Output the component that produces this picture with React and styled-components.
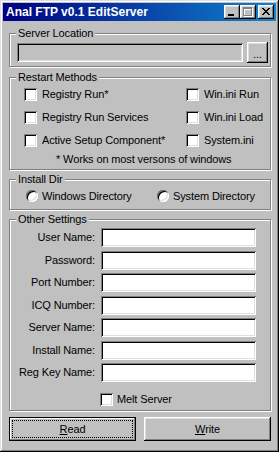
import React from "react";
import styled, { createGlobalStyle } from "styled-components";

const GlobalStyle = createGlobalStyle`
  html, body {
    margin: 0;
    padding: 0;
    background: #c0c0c0;
  }
  body {
    font-family: "Liberation Sans", Arial, sans-serif;
    font-size: 11px;
    letter-spacing: -0.12px;
    color: #000;
  }
`;

const raised = `
  box-shadow: inset -1px -1px #000, inset 1px 1px #fff,
    inset -2px -2px #808080, inset 2px 2px #dfdfdf;
`;
const sunken = `
  box-shadow: inset 1px 1px #808080, inset -1px -1px #fff,
    inset 2px 2px #000, inset -2px -2px #dfdfdf;
`;

const Window = styled.div`
  width: 279px;
  height: 452px;
  box-sizing: border-box;
  padding: 3px;
  background: #c0c0c0;
  box-shadow: inset -1px -1px #000, inset 1px 1px #dfdfdf,
    inset -2px -2px #808080, inset 2px 2px #fff;
  display: flex;
  flex-direction: column;
`;

const TitleBar = styled.div`
  height: 18px;
  display: flex;
  align-items: center;
  padding: 0 2px 0 3px;
  background: linear-gradient(to right, #000080, #1084d0);
`;

const Title = styled.span`
  flex: 1;
  color: #fff;
  font-weight: bold;
  font-size: 12px;
  letter-spacing: 0;
  line-height: 18px;
  white-space: nowrap;
`;

const CapButton = styled.div`
  width: 16px;
  height: 14px;
  background: #c0c0c0;
  margin-left: ${(p) => p.$gap || 0}px;
  ${raised}
  svg {
    display: block;
  }
`;

const Body = styled.div`
  display: flex;
  flex-direction: column;
  padding: 0 5px 0 6px;
`;

const Group = styled.div`
  margin-top: ${(p) => p.$top}px;
  border: 1px solid #808080;
  box-shadow: inset 1px 1px #fff, 1px 1px #fff;
  display: flex;
  flex-direction: column;
  padding-bottom: ${(p) => p.$bottom}px;
`;

const Legend = styled.div`
  align-self: flex-start;
  margin: -7px 0 0 6px;
  padding: 0 2px;
  line-height: 13px;
  background: #c0c0c0;
`;

const LocationRow = styled.div`
  display: flex;
  align-items: center;
  gap: 4px;
  margin: 2px 0 0 7px;
`;

const Field = styled.input`
  box-sizing: border-box;
  width: ${(p) => (p.$w ? `${p.$w}px` : "100%")};
  height: 19px;
  margin: 0;
  border: 0;
  padding: 2px 3px;
  font: inherit;
  outline: none;
  background: ${(p) => (p.disabled ? "#c0c0c0" : "#fff")};
  ${sunken}
`;

const SmallButton = styled.div`
  width: 21px;
  height: 21px;
  box-sizing: border-box;
  background: #c0c0c0;
  display: flex;
  align-items: center;
  justify-content: center;
  padding-top: 3px;
  ${raised}
`;

const OptionGrid = styled.div`
  display: grid;
  grid-template-columns: ${(p) => p.$cols};
  grid-auto-rows: ${(p) => p.$row}px;
  row-gap: 10px;
  margin: 4px 0 0 ${(p) => p.$left}px;
`;

const Option = styled.label`
  display: flex;
  align-items: center;
  gap: ${(p) => p.$gap ?? 5}px;
  line-height: 13px;
  white-space: nowrap;
`;

const Check = styled.input.attrs({ type: "checkbox" })`
  appearance: none;
  width: 13px;
  height: 13px;
  margin: 0;
  flex: none;
  background: #fff;
  ${sunken}
`;

const Radio = styled.input.attrs({ type: "radio" })`
  appearance: none;
  width: 12px;
  height: 12px;
  margin: 0;
  flex: none;
  border-radius: 50%;
  background: #fff;
  box-shadow: inset 1px 1px #808080, inset -1px -1px #fff,
    inset 2px 2px #000, inset -2px -2px #dfdfdf;
`;

const Note = styled.div`
  margin: 6px 0 0 46px;
  line-height: 13px;
`;

const FormGrid = styled.div`
  display: grid;
  grid-template-columns: 87px 155px;
  grid-auto-rows: 19px;
  column-gap: 4px;
  row-gap: 3.5px;
  margin: 2px 0 0 0;
`;

const FieldLabel = styled.label`
  align-self: center;
  text-align: right;
  padding-right: 2px;
  line-height: 13px;
  white-space: nowrap;
`;

const MeltRow = styled.div`
  margin: 11px 0 0 90px;
  height: 13px;
  display: flex;
`;

const ButtonRow = styled.div`
  display: grid;
  grid-template-columns: 127px 127px;
  column-gap: 8px;
  margin-top: 6px;
`;

const PushButton = styled.div`
  height: 24px;
  box-sizing: border-box;
  padding: 3px;
  display: flex;
  background: #c0c0c0;
  box-shadow: ${(p) =>
    p.$default
      ? "inset 0 0 0 1px #000, inset -2px -2px #808080, inset 2px 2px #fff"
      : "inset -1px -1px #000, inset 1px 1px #fff, inset -2px -2px #808080, inset 2px 2px #dfdfdf"};
`;

const Caption = styled.span`
  flex: 1;
  display: flex;
  align-items: center;
  justify-content: center;
  border: 1px dotted ${(p) => (p.$focus ? "#000" : "transparent")};
  font-size: 11px;
`;

const closeRows = [
  [[0, 2], [6, 2]],
  [[1, 2], [5, 2]],
  [[2, 4]],
  [[3, 2]],
  [[2, 4]],
  [[1, 2], [5, 2]],
  [[0, 2], [6, 2]],
];

function MinGlyph() {
  return (
    <svg width="16" height="14" shapeRendering="crispEdges">
      <rect x="4" y="9" width="6" height="2" fill="#000" />
    </svg>
  );
}

function MaxGlyph() {
  const box = (dx, c) => (
    <g fill={c}>
      <rect x={3 + dx} y={2 + dx} width="9" height="2" />
      <rect x={3 + dx} y={2 + dx} width="1" height="9" />
      <rect x={11 + dx} y={2 + dx} width="1" height="9" />
      <rect x={3 + dx} y={10 + dx} width="9" height="1" />
    </g>
  );
  return (
    <svg width="16" height="14" shapeRendering="crispEdges">
      {box(1, "#fff")}
      {box(0, "#808080")}
    </svg>
  );
}

function CloseGlyph() {
  return (
    <svg width="16" height="14" shapeRendering="crispEdges">
      {closeRows.map((row, y) =>
        row.map(([x, w]) => (
          <rect key={`${y}-${x}`} x={4 + x} y={3 + y} width={w} height="1" fill="#000" />
        ))
      )}
    </svg>
  );
}

const restart = [
  "Registry Run*",
  "Win.ini Run",
  "Registry Run Services",
  "Win.ini Load",
  "Active Setup Component*",
  "System.ini",
];

const settings = [
  "User Name:",
  "Password:",
  "Port Number:",
  "ICQ Number:",
  "Server Name:",
  "Install Name:",
  "Reg Key Name:",
];

export default function App() {
  return (
    <>
      <GlobalStyle />
      <Window>
        <TitleBar>
          <Title>Anal FTP v0.1 EditServer</Title>
          <CapButton>
            <MinGlyph />
          </CapButton>
          <CapButton>
            <MaxGlyph />
          </CapButton>
          <CapButton $gap={2}>
            <CloseGlyph />
          </CapButton>
        </TitleBar>
        <Body>
          <Group $top={12} $bottom={3}>
            <Legend>Server Location</Legend>
            <LocationRow>
              <Field $w={226} disabled />
              <SmallButton>...</SmallButton>
            </LocationRow>
          </Group>

          <Group $top={10} $bottom={3}>
            <Legend>Restart Methods</Legend>
            <OptionGrid $cols="162px auto" $row={13} $left={14}>
              {restart.map((t) => (
                <Option key={t}>
                  <Check />
                  {t}
                </Option>
              ))}
            </OptionGrid>
            <Note>* Works on most versons of windows</Note>
          </Group>

          <Group $top={9} $bottom={7}>
            <Legend>Install Dir</Legend>
            <OptionGrid $cols="131px auto" $row={12} $left={16}>
              <Option $gap={4}>
                <Radio name="dir" />
                Windows Directory
              </Option>
              <Option $gap={4}>
                <Radio name="dir" />
                System Directory
              </Option>
            </OptionGrid>
          </Group>

          <Group $top={9} $bottom={4}>
            <Legend>Other Settings</Legend>
            <FormGrid>
              {settings.map((t) => (
                <React.Fragment key={t}>
                  <FieldLabel>{t}</FieldLabel>
                  <Field />
                </React.Fragment>
              ))}
            </FormGrid>
            <MeltRow>
              <Option $gap={4}>
                <Check />
                Melt Server
              </Option>
            </MeltRow>
          </Group>

          <ButtonRow>
            <PushButton $default>
              <Caption $focus>
                <u>R</u>ead
              </Caption>
            </PushButton>
            <PushButton>
              <Caption>
                <u>W</u>rite
              </Caption>
            </PushButton>
          </ButtonRow>
        </Body>
      </Window>
    </>
  );
}
